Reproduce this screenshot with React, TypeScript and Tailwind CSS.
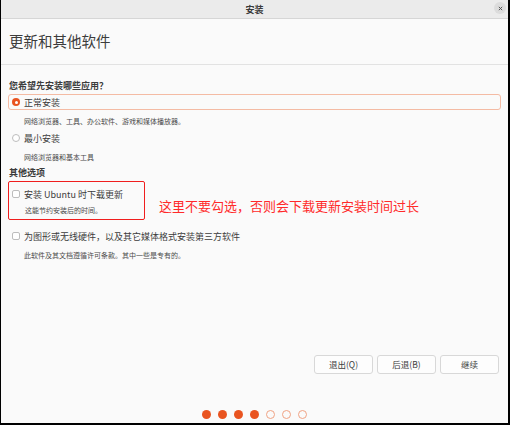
import React from "react";

const font = { fontFamily: '"Noto Sans CJK SC", "Noto Sans", sans-serif' };

function Radio({ checked }: { checked?: boolean }) {
  return checked ? (
    <span className="w-[8px] h-[8px] rounded-full bg-[#e95420] flex items-center justify-center shrink-0">
      <span className="w-[3px] h-[3px] rounded-full bg-white" />
    </span>
  ) : (
    <span className="w-[8px] h-[8px] rounded-full border border-[#bdbdbd] bg-white shrink-0" />
  );
}

function Check() {
  return <span className="w-[8px] h-[8px] rounded-[2px] border border-[#bdbdbd] bg-white shrink-0" />;
}

export default function App() {
  return (
    <div
      style={font}
      className="w-[510px] h-[425px] bg-[#fafafa] border-l border-r-2 border-b-2 border-black flex flex-col text-[#3c3c3c] overflow-hidden"
    >
      {/* title bar */}
      <div className="relative h-[19px] shrink-0 bg-[#ebebeb] border-b border-[#d6d6d6] flex items-center justify-center">
        <span className="text-[9px] font-bold text-[#3a3a3a] leading-none">安装</span>
        <span className="absolute right-[2px] top-[2px] w-[12px] h-[12px] rounded-full bg-[#dcdcdc] flex items-center justify-center">
          <svg width="5" height="5" viewBox="0 0 6 6">
            <path d="M1 1L5 5M5 1L1 5" stroke="#555" strokeWidth="1.2" />
          </svg>
        </span>
      </div>

      {/* heading */}
      <div className="h-[46px] shrink-0 border-b border-[#e2e2e2] flex items-center px-[8px]">
        <span className="text-[14.5px] leading-none text-[#3c3c3c]">更新和其他软件</span>
      </div>

      <div className="flex-1 flex flex-col px-[7px]">
        <div className="mt-[14px] h-[13px] flex items-center px-[1px] text-[9px] font-bold leading-none">
          您希望先安装哪些应用？
        </div>
        <div className="mt-[2px] h-[16px] rounded-[3px] border-[1.5px] border-[#f4bba4] flex items-center gap-[4px] pl-[3px] text-[9px] leading-none">
          <Radio checked />
          <span>正常安装</span>
        </div>
        <div className="mt-[6px] h-[10px] flex items-center pl-[16px] text-[7px] leading-none text-[#4a4a4a]">
          网络浏览器、工具、办公软件、游戏和媒体播放器。
        </div>
        <div className="mt-[4px] h-[16px] flex items-center gap-[4px] pl-[4px] text-[9px] leading-none">
          <Radio />
          <span>最小安装</span>
        </div>
        <div className="mt-[6px] h-[10px] flex items-center pl-[16px] text-[7px] leading-none text-[#4a4a4a]">
          网络浏览器和基本工具
        </div>
        <div className="mt-[4px] h-[13px] flex items-center px-[1px] text-[9px] font-bold leading-none">
          其他选项
        </div>

        <div className="mt-[2px] flex items-start">
          <div className="w-[137px] h-[39px] border-[1.5px] border-[#f01e1e] rounded-[2px] flex flex-col pl-[3px]">
            <div className="mt-[4px] h-[16px] flex items-center gap-[4px] text-[9px] leading-none">
              <Check />
              <span>安装 Ubuntu 时下载更新</span>
            </div>
            <div className="mt-[3px] h-[10px] flex items-center pl-[13px] text-[7px] leading-none text-[#4a4a4a]">
              这能节约安装后的时间。
            </div>
          </div>
          <div className="ml-[14px] mt-[18px] text-[13px] leading-none text-[#ff2a2a]">
            这里不要勾选，否则会下载更新安装时间过长
          </div>
        </div>

        <div className="mt-[8px] h-[16px] flex items-center gap-[4px] pl-[4px] text-[9px] leading-none">
          <Check />
          <span>为图形或无线硬件，以及其它媒体格式安装第三方软件</span>
        </div>
        <div className="mt-[6px] h-[10px] flex items-center pl-[16px] text-[7px] leading-none text-[#4a4a4a]">
          此软件及其文档遵循许可条款。其中一些是专有的。
        </div>

        <div className="flex-1" />

        <div className="flex justify-end gap-[4px] pr-[2px]">
          {["退出(Q)", "后退(B)", "继续"].map((t) => (
            <button
              key={t}
              className="w-[59px] h-[19px] rounded-[3px] border border-[#d8d8d8] bg-[#fdfdfd] text-[8.5px] leading-none text-[#3c3c3c] flex items-center justify-center"
            >
              {t}
            </button>
          ))}
        </div>

        <div className="mt-[36px] mb-[4px] flex justify-center gap-[7px]">
          {[0, 1, 2, 3].map((i) => (
            <span key={i} className="w-[9px] h-[9px] rounded-full bg-[#e95420]" />
          ))}
          {[4, 5, 6].map((i) => (
            <span key={i} className="w-[9px] h-[9px] rounded-full border border-[#f0a384]" />
          ))}
        </div>
      </div>
    </div>
  );
}
